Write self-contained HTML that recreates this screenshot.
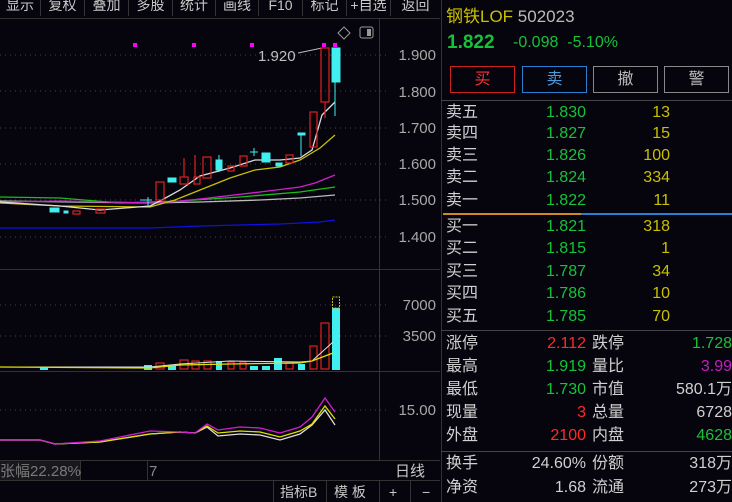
<!DOCTYPE html>
<html><head><meta charset="utf-8"><style>
*{margin:0;padding:0;box-sizing:border-box}
body{width:732px;height:502px;background:#06050d;overflow:hidden;position:relative;font-family:"Liberation Sans","Noto Sans CJK SC",sans-serif;color:#c8c8c8}
.a{position:absolute;white-space:nowrap}
.tb{position:absolute;top:0;height:18px;font-size:14px;line-height:14px;color:#c8c8c8;text-align:center;border-right:1px solid #333;top:-2px}
.r{text-align:right}
.g{color:#16c23a}.y{color:#c8c000}.rd{color:#ff2a2a}.w{color:#d0d0d0}
.row{position:absolute;left:446px;font-size:16px;height:20px;line-height:20px;width:286px}
.row span{position:absolute}
</style></head><body>
<!-- top toolbar -->
<div class="tb" style="left:0;width:41px">显示</div>
<div class="tb" style="left:41px;width:44px">复权</div>
<div class="tb" style="left:85px;width:44px">叠加</div>
<div class="tb" style="left:129px;width:44px">多股</div>
<div class="tb" style="left:173px;width:43px">统计</div>
<div class="tb" style="left:216px;width:43px">画线</div>
<div class="tb" style="left:259px;width:44px">F10</div>
<div class="tb" style="left:303px;width:44px">标记</div>
<div class="tb" style="left:347px;width:44px">+自选</div>
<div class="tb" style="left:391px;width:49px;border:none">返回</div>
<div class="a" style="left:0;top:18px;width:440px;height:1px;background:#333"></div>

<svg class="a" style="left:0;top:0" width="440" height="502">
<g stroke="#333" stroke-width="1" fill="none">
<line x1="379.5" y1="19" x2="379.5" y2="460"/>
<line x1="0" y1="269.5" x2="440" y2="269.5"/>
<line x1="0" y1="371.5" x2="440" y2="371.5"/>
<line x1="0" y1="460.5" x2="440" y2="460.5"/>
<line x1="0" y1="480.5" x2="440" y2="480.5"/>
<line x1="80.5" y1="460" x2="80.5" y2="480"/>
<line x1="147.5" y1="460" x2="147.5" y2="480"/>
<line x1="273.5" y1="480" x2="273.5" y2="502"/>
<line x1="326.5" y1="480" x2="326.5" y2="502"/>
<line x1="379.5" y1="480" x2="379.5" y2="502"/>
<line x1="410.5" y1="480" x2="410.5" y2="502"/>
</g>
<g stroke="#444" stroke-dasharray="1,4">
<line x1="0" y1="55" x2="386" y2="55"/><line x1="0" y1="91" x2="386" y2="91"/><line x1="0" y1="128" x2="386" y2="128"/><line x1="0" y1="164" x2="386" y2="164"/><line x1="0" y1="200" x2="386" y2="200"/><line x1="0" y1="237" x2="386" y2="237"/>
<line x1="0" y1="305" x2="386" y2="305"/><line x1="0" y1="336" x2="386" y2="336"/><line x1="0" y1="410" x2="386" y2="410"/>
</g>
<g font-size="15" fill="#a8a8a8" text-anchor="end">
<text x="436" y="60">1.900</text><text x="436" y="97">1.800</text><text x="436" y="133">1.700</text><text x="436" y="169">1.600</text><text x="436" y="205">1.500</text><text x="436" y="242">1.400</text>
<text x="436" y="310">7000</text><text x="436" y="341">3500</text><text x="436" y="415">15.00</text>
</g>
<text x="258" y="61" font-size="15" fill="#c0c0c0">1.920</text>
<polyline points="298,53 322,48" stroke="#bbb" fill="none"/>
<path d="M344,27 l6,6 -6,6 -6,-6z" stroke="#999" fill="none"/>
<rect x="360" y="27" width="13" height="11" rx="2" stroke="#999" fill="none"/><rect x="367" y="29" width="4" height="7" fill="#999"/>
<g fill="#ff00ff"><rect x="133" y="43" width="4" height="4"/><rect x="192" y="43" width="4" height="4"/><rect x="250" y="43" width="4" height="4"/><rect x="322" y="43" width="4" height="4"/><rect x="333" y="43" width="4" height="4"/></g>
<!-- MAs -->
<g fill="none" stroke-width="1.3">
<polyline stroke="#1010e0" points="0,228 150,228 200,226 280,224 320,222 335,220"/>
<polyline stroke="#bbb" points="0,201 150,203 200,202 260,200 300,198 335,195"/>
<polyline stroke="#16c016" points="0,197 60,198 120,203 180,201 240,197 300,192 335,187"/>
<polyline stroke="#d020d0" points="0,202 60,201 160,203 200,199 260,192 300,187 315,183 335,175"/>
<polyline stroke="#c8c000" points="0,203 60,206 150,207 175,200 200,190 230,178 255,170 280,167 300,160 320,148 335,135"/>
<polyline stroke="#ddd" points="0,202 60,206 100,210 150,206 160,201 180,190 200,176 230,168 255,160 280,160 300,158 312,150 322,115 335,102"/>
</g>
<!-- candles -->
<g stroke="#e02020" fill="none" stroke-width="1.2">
<rect x="156" y="182" width="8" height="18"/><rect x="180" y="177" width="8" height="7"/><rect x="194" y="177" width="6" height="7"/><rect x="203" y="157" width="8" height="21"/><rect x="228" y="166" width="6" height="5"/><rect x="240" y="156" width="7" height="10"/><rect x="286" y="155" width="7" height="8"/><rect x="310" y="112" width="7" height="35"/><rect x="321" y="48" width="8" height="54"/>
<rect x="96" y="209" width="9" height="4"/><rect x="73" y="211" width="7" height="3"/>
<line x1="184" y1="158" x2="184" y2="177"/><line x1="195" y1="155" x2="195" y2="177"/><line x1="325" y1="102" x2="325" y2="118"/>
</g>
<g fill="#40f0f0" stroke="#40f0f0">
<rect x="168" y="178" width="8" height="4"/><rect x="216" y="160" width="6" height="10"/><rect x="262" y="153" width="8" height="9"/><rect x="276" y="163" width="6" height="3"/><rect x="298" y="133" width="7" height="2"/><rect x="332" y="48" width="8" height="34"/><rect x="50" y="208" width="9" height="4"/><rect x="64" y="211" width="4" height="2"/>
<line x1="335" y1="82" x2="335" y2="116"/><line x1="301" y1="135" x2="301" y2="156"/><line x1="219" y1="155" x2="219" y2="172"/><line x1="148" y1="197" x2="148" y2="206"/><line x1="140" y1="200" x2="152" y2="200"/><line x1="254" y1="148" x2="254" y2="156"/><line x1="250" y1="152" x2="258" y2="152"/>
</g>
<!-- volume -->
<g stroke="#e02020" fill="none" stroke-width="1.2">
<rect x="156" y="363" width="8" height="6"/><rect x="180" y="360" width="8" height="9"/><rect x="192" y="361" width="7" height="8"/><rect x="204" y="361" width="7" height="8"/><rect x="228" y="362" width="6" height="7"/><rect x="240" y="362" width="6" height="7"/><rect x="286" y="363" width="7" height="6"/><rect x="310" y="346" width="7" height="23"/><rect x="321" y="323" width="8" height="46"/>
</g>
<g fill="#40f0f0"><rect x="144" y="365" width="8" height="5"/><rect x="168" y="366" width="8" height="4"/><rect x="216" y="361" width="6" height="9"/><rect x="250" y="366" width="8" height="4"/><rect x="262" y="366" width="8" height="4"/><rect x="274" y="358" width="8" height="12"/><rect x="298" y="364" width="7" height="6"/><rect x="332" y="308" width="8" height="62"/><rect x="40" y="367" width="8" height="3"/></g>
<rect x="332.5" y="297" width="7" height="11" stroke="#c8c000" fill="none" stroke-dasharray="2,1"/>
<polyline fill="none" stroke="#ddd" points="0,367 150,367 180,364 230,361 300,362 312,361 333,342"/>
<polyline fill="none" stroke="#e0e000" stroke-width="1.3" points="0,367 150,368 180,365 230,364 300,363 312,361 333,353"/>
<!-- indicator -->
<polyline fill="none" stroke="#ddd" stroke-width="1.3" points="0,440 40,440 55,444 100,442 150,434 180,432 195,433 207,427 218,436 240,434 260,435 280,440 300,434 312,425 325,410 335,425"/>
<polyline fill="none" stroke="#e0e000" stroke-width="1.3" points="0,440 40,440 55,444 100,442 150,434 180,432 195,433 207,426 218,433 240,431 260,432 280,437 300,431 312,424 325,406 335,419"/>
<polyline fill="none" stroke="#d020d0" stroke-width="1.3" points="0,440 40,440 55,444 100,441 150,431 180,432 195,433 207,424 218,430 240,427 260,428 280,433 300,427 312,417 325,398 335,412"/>
<text x="0" y="476" font-size="15" fill="#c8c8c8">张幅22.28%</text>
<rect x="0" y="461" width="80" height="19" fill="#2a2a2a" opacity="0.5"/>
<text x="149" y="476" font-size="15" fill="#888">7</text>
<text x="395" y="476" font-size="15" fill="#c8c8c8">日线</text>
<text x="280" y="497" font-size="14" fill="#c8c8c8">指标B</text>
<text x="334" y="497" font-size="14" fill="#c8c8c8">模 板</text>
<text x="389" y="497" font-size="14" fill="#c8c8c8">+</text>
<text x="422" y="497" font-size="14" fill="#c8c8c8">−</text>
</svg>

<!-- right panel -->
<div class="a" style="left:441px;top:0;width:1px;height:502px;background:#333"></div>
<div class="a" style="left:446px;top:2px;font-size:17px"><span class="y">钢铁LOF</span> <span style="color:#bbb">502023</span></div>
<div class="a g" style="left:447px;top:32px;font-size:19px;font-weight:bold">1.822</div>
<div class="a g" style="left:513px;top:34px;font-size:16px">-0.098&nbsp;&nbsp;-5.10%</div>
<div class="a" style="left:450px;top:66px;width:65px;height:27px;border:1px solid #d02020;color:#ff3030;text-align:center;line-height:25px;font-size:16px">买</div>
<div class="a" style="left:522px;top:66px;width:65px;height:27px;border:1px solid #2a80d0;color:#4a9ae0;text-align:center;line-height:25px;font-size:16px">卖</div>
<div class="a" style="left:593px;top:66px;width:65px;height:27px;border:1px solid #888;color:#bbb;text-align:center;line-height:25px;font-size:16px">撤</div>
<div class="a" style="left:664px;top:66px;width:65px;height:27px;border:1px solid #888;color:#bbb;text-align:center;line-height:25px;font-size:16px">警</div>
<div class="a" style="left:441px;top:100px;width:291px;height:1px;background:#444"></div>
<div class="a" style="left:443px;top:213px;width:138px;height:2px;background:#d08a20"></div>
<div class="a" style="left:581px;top:213px;width:151px;height:2px;background:#2a80d0"></div>
<div class="a" style="left:441px;top:330px;width:291px;height:1px;background:#444"></div>
<div class="a" style="left:441px;top:451px;width:291px;height:1px;background:#444"></div>

<div class="row" style="top:103px"><span class="w">卖五</span><span class="g r" style="right:146px">1.830</span><span class="y r" style="right:62px">13</span></div>
<div class="row" style="top:124px"><span class="w">卖四</span><span class="g r" style="right:146px">1.827</span><span class="y r" style="right:62px">15</span></div>
<div class="row" style="top:146px"><span class="w">卖三</span><span class="g r" style="right:146px">1.826</span><span class="y r" style="right:62px">100</span></div>
<div class="row" style="top:168px"><span class="w">卖二</span><span class="g r" style="right:146px">1.824</span><span class="y r" style="right:62px">334</span></div>
<div class="row" style="top:191px"><span class="w">卖一</span><span class="g r" style="right:146px">1.822</span><span class="y r" style="right:62px">11</span></div>
<div class="row" style="top:217px"><span class="w">买一</span><span class="g r" style="right:146px">1.821</span><span class="y r" style="right:62px">318</span></div>
<div class="row" style="top:239px"><span class="w">买二</span><span class="g r" style="right:146px">1.815</span><span class="y r" style="right:62px">1</span></div>
<div class="row" style="top:262px"><span class="w">买三</span><span class="g r" style="right:146px">1.787</span><span class="y r" style="right:62px">34</span></div>
<div class="row" style="top:284px"><span class="w">买四</span><span class="g r" style="right:146px">1.786</span><span class="y r" style="right:62px">10</span></div>
<div class="row" style="top:307px"><span class="w">买五</span><span class="g r" style="right:146px">1.785</span><span class="y r" style="right:62px">70</span></div>

<div class="row" style="top:334px"><span class="w">涨停</span><span class="rd r" style="right:146px">2.112</span><span class="w" style="left:146px">跌停</span><span class="g r" style="right:0">1.728</span></div>
<div class="row" style="top:357px"><span class="w">最高</span><span class="g r" style="right:146px">1.919</span><span class="w" style="left:146px">量比</span><span class="r" style="right:0;color:#c020c0">3.99</span></div>
<div class="row" style="top:380px"><span class="w">最低</span><span class="g r" style="right:146px">1.730</span><span class="w" style="left:146px">市值</span><span class="w r" style="right:0">580.1万</span></div>
<div class="row" style="top:403px"><span class="w">现量</span><span class="rd r" style="right:146px">3</span><span class="w" style="left:146px">总量</span><span class="w r" style="right:0">6728</span></div>
<div class="row" style="top:426px"><span class="w">外盘</span><span class="rd r" style="right:146px">2100</span><span class="w" style="left:146px">内盘</span><span class="g r" style="right:0">4628</span></div>
<div class="row" style="top:454px"><span class="w">换手</span><span class="w r" style="right:146px">24.60%</span><span class="w" style="left:146px">份额</span><span class="w r" style="right:0">318万</span></div>
<div class="row" style="top:478px"><span class="w">净资</span><span class="w r" style="right:146px">1.68</span><span class="w" style="left:146px">流通</span><span class="w r" style="right:0">273万</span></div>
</body></html>
